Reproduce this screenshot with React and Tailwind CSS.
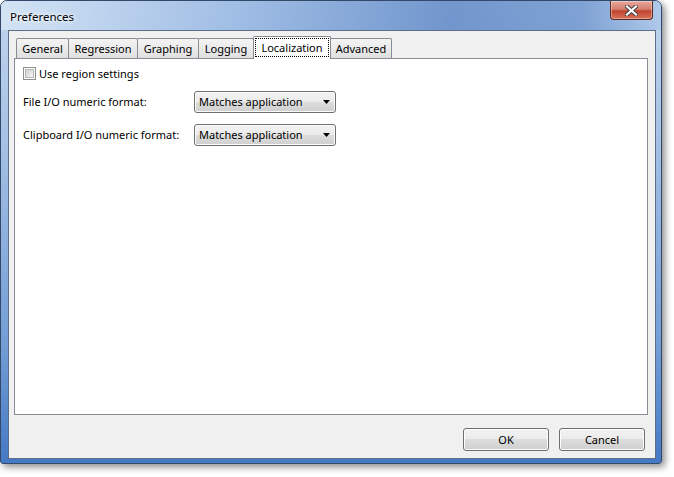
import React from 'react';

const tabs = [
  { label: 'General', w: 'w-[53px]' },
  { label: 'Regression', w: 'w-[70px]' },
  { label: 'Graphing', w: 'w-[62px]' },
  { label: 'Logging', w: 'w-[56px]' },
  { label: 'Localization', w: 'w-[78px]', active: true },
  { label: 'Advanced', w: 'w-[62px]' },
];

// button face used by combo boxes and push buttons
const face =
  'rounded-[3px] border border-[#707070] bg-[linear-gradient(#f2f2f2,#ebebeb_50%,#dddddd_50%,#cfcfcf)] shadow-[inset_0_0_0_1px_#fcfcfc]';

function Combo() {
  return (
    <div className={`${face} shrink-0 w-[142px] h-[22px] flex items-center justify-between pl-[4px] pr-[5px]`}>
      <span className="pb-px">Matches application</span>
      <svg width="7" height="4" viewBox="0 0 7 4">
        <path d="M0 0h7L3.5 4z" fill="#000" />
      </svg>
    </div>
  );
}

function Tab({ label, w, active }) {
  if (active) {
    return (
      <div className={`${w} h-[23px] -ml-px -mb-px z-10 relative bg-white border border-b-0 border-[#898c95] rounded-t-[2px] px-[1px] pt-[1px] pb-[2px]`}>
        <div className="h-full flex items-center justify-center border border-dotted border-black">
          {label}
        </div>
      </div>
    );
  }
  return (
    <div className={`${w} h-[20px] -ml-px flex items-center justify-center border border-b-0 border-[#898c95] rounded-t-[2px] bg-linear-to-b from-[#f4f4f4] to-[#e0e0e0]`}>
      {label}
    </div>
  );
}

function CloseButton() {
  return (
    <div className="w-[43px] h-[19px] rounded-b-[4px] border border-t-0 border-[#5b2a26] bg-[linear-gradient(#e9a99b,#d47f6e_45%,#c2432e_55%,#d7735a)] shadow-[inset_0_0_0_1px_rgba(255,255,255,0.35)] flex items-center justify-center">
      <svg width="13" height="11" viewBox="0 0 13 11">
        <path d="M2 1.5l9 8M11 1.5l-9 8" stroke="#3b3b3b" strokeWidth="4" strokeLinecap="square" />
        <path d="M2 1.5l9 8M11 1.5l-9 8" stroke="#fff" strokeWidth="2.2" strokeLinecap="square" />
      </svg>
    </div>
  );
}

export default function App() {
  return (
    <div className="w-[674px] h-[477px] bg-white text-[11px] text-black font-['Segoe_UI','Noto_Sans',sans-serif] leading-none">
      {/* window frame */}
      <div className="w-[662px] h-[464px] flex flex-col rounded-t-[7px] rounded-b-[3px] border border-[#33496a] shadow-[3px_3px_7px_rgba(0,0,0,0.45)] bg-[linear-gradient(#c3d7ee,#a0bde3_35%,#729dd5_75%,#4479c4)]">
        {/* title bar */}
        <div className="h-[29px] flex justify-between rounded-t-[6px] bg-[linear-gradient(90deg,rgba(212,228,245,0.95),rgba(150,182,226,0.75)_35%,rgba(80,124,192,0.7)_68%,rgba(92,134,198,0.65)_88%,rgba(165,195,232,0.65))]">
          <span className="pl-[9px] pt-[10px] text-[11.5px] [text-shadow:0_0_6px_#fff,0_0_3px_#fff]">Preferences</span>
          <div className="mr-[8px]">
            <CloseButton />
          </div>
        </div>

        {/* client area */}
        <div className="flex-1 ml-[7px] mr-[5px] mb-[4px] border border-[#5d6f87] bg-[#f0f0f0] flex flex-col pt-[5px] pb-[7px] pl-[5px] pr-[7px]">
          <div className="h-[22px] flex items-end pl-[3px]">
            {tabs.map((t) => (
              <Tab key={t.label} {...t} />
            ))}
          </div>

          <div className="h-[357px] bg-white border border-[#898c95] pl-[8px] pt-[8px] flex flex-col">
            <label className="flex items-center gap-[3px] h-[13px]">
              <span className="w-[13px] h-[13px] border border-[#8e8f8f] bg-white p-[1px]">
                <span className="block w-full h-full border border-[#b4b8bd] bg-linear-to-br from-[#d0d0d0] to-[#f7f7f7]" />
              </span>
              <span className="pb-px">Use region settings</span>
            </label>

            <div className="flex items-center mt-[11px]">
              <span className="w-[171px] shrink-0 pb-px">File I/O numeric format:</span>
              <Combo />
            </div>
            <div className="flex items-center mt-[11px]">
              <span className="w-[171px] shrink-0 pb-px">Clipboard I/O numeric format:</span>
              <Combo />
            </div>
          </div>

          <div className="mt-[13px] flex justify-end gap-[10px] pr-[3px]">
            <button className={`${face} w-[86px] h-[23px]`}>OK</button>
            <button className={`${face} w-[86px] h-[23px]`}>Cancel</button>
          </div>
        </div>
      </div>
    </div>
  );
}
